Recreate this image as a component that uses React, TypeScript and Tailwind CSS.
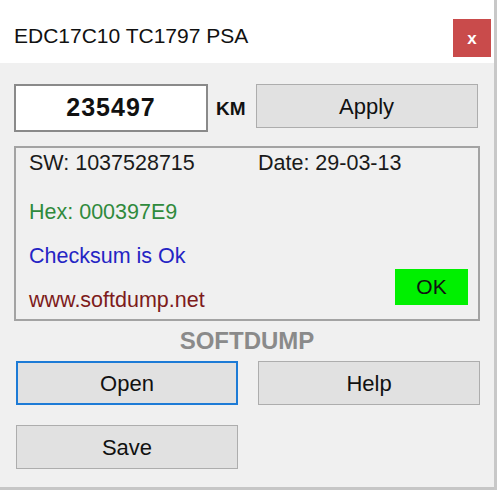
import type { ReactNode } from 'react';

const font = "font-['Liberation_Sans',Arial,sans-serif]";

function WinButton({ children, focused = false }: { children: ReactNode; focused?: boolean }) {
  return (
    <button
      className={
        focused
          ? 'h-[44px] w-[222px] border-2 border-[#1d7bd6] bg-[#e1e1e1] text-[22px] text-[#111]'
          : 'h-[44px] w-[222px] border border-[#adadad] bg-[#e1e1e1] text-[22px] text-[#111]'
      }
    >
      {children}
    </button>
  );
}

export default function App() {
  return (
    <div className={`h-[500px] w-[500px] overflow-hidden bg-white ${font}`}>
      <div className="w-[497px] border-r-[3px] border-[#c8c8c8]">
        {/* title bar */}
        <div className="flex h-[63px] items-start justify-between bg-white pl-[14px] pr-[3px]">
          <span className="mt-[20px] text-[21px] text-[#111]">EDC17C10 TC1797 PSA</span>
          <div className="mt-[19px] flex h-[38px] w-[38px] items-center justify-center bg-[#c94b4b] text-[17px] font-bold leading-none text-white">
            x
          </div>
        </div>

        {/* client area */}
        <div className="h-[427px] border-b-[3px] border-[#c6c6c6] bg-[#f0f0f0] px-[14px] pt-[21px]">
          <div className="flex items-start">
            <div className="flex h-[48px] w-[194px] items-center justify-center border-2 border-[#8a8a8a] bg-white text-[25px] font-bold tracking-[1px] text-[#111]">
              235497
            </div>
            <span className="ml-[8px] mt-[11px] text-[19px] font-bold text-[#111]">KM</span>
            <div className="ml-[10px]">
              <WinButton>Apply</WinButton>
            </div>
          </div>

          <div className="mt-[14px] flex h-[175px] w-[466px] flex-col border-2 border-[#a3a3a3] px-[13px] pt-[2px] text-[21.5px]">
            <div className="flex h-[26px] items-center text-[#1a1a1a]">
              <span className="w-[229px]">SW: 1037528715</span>
              <span>Date: 29-03-13</span>
            </div>
            <div className="mt-[23px] flex h-[26px] items-center text-[#2f8a3c]">Hex: 000397E9</div>
            <div className="mt-[18px] flex h-[26px] items-center text-[#2424c4]">Checksum is Ok</div>
            <div className="mt-[18px] flex h-[26px] items-center justify-between">
              <span className="text-[#7d1b1b]">www.softdump.net</span>
              <span className="-mt-[26px] mr-[-3px] flex h-[36px] w-[73px] items-center justify-center bg-[#00f000] text-[21px] text-[#111]">
                OK
              </span>
            </div>
          </div>

          <div className="mt-[6px] text-center text-[24px] font-bold leading-[28px] text-[#8a8a8a]">SOFTDUMP</div>

          <div className="mt-[6px] grid grid-cols-[222px_222px] gap-x-[20px] gap-y-[20px] pl-[2px]">
            <WinButton focused>Open</WinButton>
            <WinButton>Help</WinButton>
            <WinButton>Save</WinButton>
          </div>
        </div>
      </div>
    </div>
  );
}
